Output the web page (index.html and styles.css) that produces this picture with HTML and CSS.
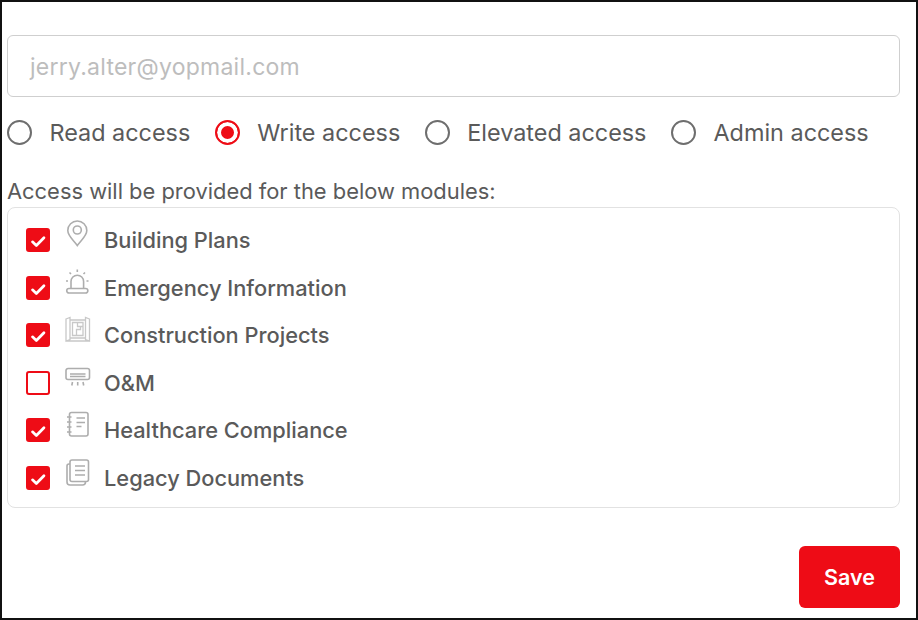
FILE: index.html
```html
<!DOCTYPE html>
<html lang="en">
<head>
<meta charset="utf-8">
<title>Access</title>
<link rel="stylesheet" href="styles.css">
</head>
<body>
<main class="frame">
  <div class="input">jerry.alter@yopmail.com</div>
  <div class="radios">
    <label class="radio"><span class="dot"></span>Read access</label>
    <label class="radio on"><span class="dot"></span>Write access</label>
    <label class="radio"><span class="dot"></span>Elevated access</label>
    <label class="radio"><span class="dot"></span>Admin access</label>
  </div>
  <p class="note">Access will be provided for the below modules:</p>
  <ul class="card">
    <li class="row"><span class="box on"><svg viewBox="0 0 24 24"><path d="M6 14l4.200 4L18.500 9.500"/></svg></span>
      <svg class="icon" viewBox="0 0 26 28"><path d="M12.300 25.500C8.500 20 2.800 16 2.800 10.500a9.500 9.500 0 0 1 19 0c0 5.500-5.700 9.500-9.500 15z"/><circle cx="12.300" cy="10" r="4"/></svg>
      <span class="name">Building Plans</span></li>
    <li class="row"><span class="box on"><svg viewBox="0 0 24 24"><path d="M6 14l4.200 4L18.500 9.500"/></svg></span>
      <svg class="icon" viewBox="0 0 26 28"><path d="M6 20v-6.500a6.300 6.300 0 0 1 12.600 0V20M4 20.500h16.600a1.700 1.700 0 0 1 0 4.500H4a1.700 1.700 0 0 1 0-4.500zM12.300 1.500v2.500M4.500 4.500L6 6M20 4.500L18.500 6M1 13h2M21.500 13h2"/></svg>
      <span class="name">Emergency Information</span></li>
    <li class="row"><span class="box on"><svg viewBox="0 0 24 24"><path d="M6 14l4.200 4L18.500 9.500"/></svg></span>
      <svg class="icon faint" viewBox="0 0 26 28"><path d="M1 4l4-1.500v22L1 26zM24.500 4l-4-1.500v22l4 1.500zM5 5h15.500M5 23h15.500M1 26h23.500M7.500 7.500h10.500v13H7.500zM12.500 7.500v4h3v3h-4v6M15.500 11.500H18"/></svg>
      <span class="name">Construction Projects</span></li>
    <li class="row"><span class="box"></span>
      <svg class="icon" viewBox="0 0 26 28"><path d="M3 5.500h19.500a2 2 0 0 1 2 2v7a2 2 0 0 1-2 2H3a2 2 0 0 1-2-2v-7a2 2 0 0 1 2-2zM5 11h15.500M5 13.500h15.500M7.500 19l-.7 3.500M12.700 19v3.500M18 19l.7 3.500"/></svg>
      <span class="name">O&amp;M</span></li>
    <li class="row"><span class="box on"><svg viewBox="0 0 24 24"><path d="M6 14l4.200 4L18.500 9.500"/></svg></span>
      <svg class="icon" viewBox="0 0 26 28"><path d="M6.500 2.500h14.500a2 2 0 0 1 2 2v19.500a2 2 0 0 1-2 2H6.500a2 2 0 0 1-2-2V4.500a2 2 0 0 1 2-2zM11.500 8h8.500M11.500 12.500h8.500M11.500 16.500h5M2 7h4.500M2 12h4.500M2 17h4.500M2 22h4.500"/></svg>
      <span class="name">Healthcare Compliance</span></li>
    <li class="row"><span class="box on"><svg viewBox="0 0 24 24"><path d="M6 14l4.200 4L18.500 9.500"/></svg></span>
      <svg class="icon" viewBox="0 0 26 28"><path d="M7 2h14.500a2 2 0 0 1 2 2v17.500a2 2 0 0 1-2 2H7a2 2 0 0 1-2-2V4a2 2 0 0 1 2-2zM5 6H4a2 2 0 0 0-2 2v16a3 3 0 0 0 3 3h12.500a3 3 0 0 0 3-3v-.500M10 8h10M10 12.500h10M10 17h10"/></svg>
      <span class="name">Legacy Documents</span></li>
  </ul>
  <div class="actions"><button class="save">Save</button></div>
</main>
</body>
</html>
```

FILE: styles.css
```css
* { box-sizing: border-box; }
html, body { margin: 0; padding: 0; background: #fff; }
body { width: 918px; height: 620px; overflow: hidden; font-family: Inter, "Liberation Sans", sans-serif; }
.frame {
  width: 918px; height: 620px;
  border: 2px solid #111;
  padding: 33px 16px 0 5px;
  display: flex; flex-direction: column;
}
.input {
  flex: none; height: 62px; border: 1.500px solid #cfcfcf; border-radius: 6px;
  padding: 2px 0 0 22px; display: flex; align-items: center;
  font-size: 23px; letter-spacing: 0.25px; color: #bdbdbd;
}
.radios { flex: none; display: flex; align-items: center; height: 24px; margin-top: 23px; margin-bottom: 1px; }
.radio { display: flex; align-items: center; font-size: 23.400px; color: #5a5a5a; margin-right: 24.500px; }
.dot {
  width: 25px; height: 25px; border-radius: 50%; border: 2.500px solid #6e6e6e;
  margin-right: 17.500px; flex: none; background: #fff;
}
.radio.on .dot { border-color: #ee0c16; box-shadow: inset 0 0 0 4px #fff; background: #ee0c16; }
.note { flex: none; margin: 33px 0 0; font-size: 21.900px; line-height: 26px; color: #5a5a5a; }
.card {
  flex: none; list-style: none; margin: 3px 0 0; padding: 8.500px 0 5.500px 18px;
  height: 301px; border: 1.500px solid #e2e2e2; border-radius: 8px;
  display: flex; flex-direction: column; justify-content: space-between;
}
.row { display: flex; align-items: center; height: 47.600px; }
.box {
  width: 24px; height: 24px; border-radius: 3px; border: 2px solid #ee0c16;
  flex: none; display: flex; align-items: center; justify-content: center;
}
.box.on { background: #ee0c16; }
.box svg { width: 22px; height: 22px; flex: none; }
.box svg path { fill: none; stroke: #fff; stroke-width: 3; stroke-linecap: round; stroke-linejoin: round; }
.icon { width: 26px; height: 28px; margin-left: 15px; margin-top: -12px; margin-bottom: 0; flex: none; }
.icon path, .icon circle { fill: none; stroke: #adadad; stroke-width: 1.600; }
.icon.faint path { stroke: #c8c8c8; stroke-width: 1.300; }
.name { margin-left: 13px; font-size: 21.800px; font-weight: 500; color: #5a5a5a; }
.actions { flex: none; display: flex; justify-content: flex-end; margin-top: 38px; }
.save {
  width: 101px; height: 62px; border: 0; border-radius: 6px; background: #ee0c16;
  color: #fff; font: 600 21.500px Inter, "Liberation Sans", sans-serif;
}
```
